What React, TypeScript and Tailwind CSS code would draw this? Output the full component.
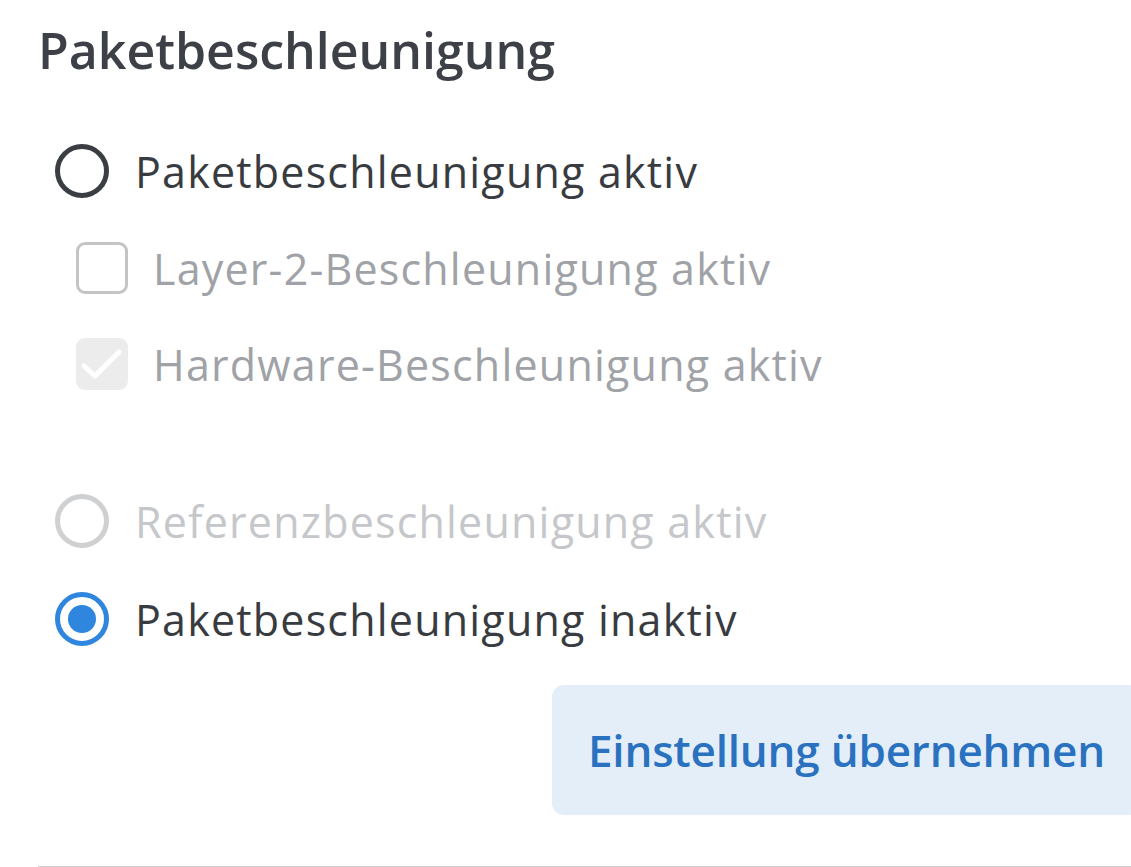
import React from "react";

// Paketbeschleunigung settings panel (mobile screenshot, 1131 × 867)

const FONT = "font-['Open_Sans','Noto_Sans',sans-serif]";

function Radio({ state }: { state: "off" | "disabled" | "on" }) {
  if (state === "on") {
    return (
      <span className="flex h-[54px] w-[54px] shrink-0 items-center justify-center rounded-full border-[5px] border-[#2f86de]">
        <span className="h-[28px] w-[28px] rounded-full bg-[#2f86de]" />
      </span>
    );
  }
  const border = state === "off" ? "border-[#3a3d42]" : "border-[#cfd0d2]";
  return <span className={`h-[54px] w-[54px] shrink-0 rounded-full border-[5px] ${border}`} />;
}

function Checkbox({ checked }: { checked: boolean }) {
  if (checked) {
    return (
      <span className="flex h-[52px] w-[52px] shrink-0 items-center justify-center rounded-[9px] bg-[#ececed]">
        <svg viewBox="0 0 52 52" className="h-[52px] w-[52px]" fill="none" stroke="#ffffff" strokeWidth={5} strokeLinecap="round" strokeLinejoin="round">
          <path d="M8 28l11 10L43 14" />
        </svg>
      </span>
    );
  }
  return <span className="h-[52px] w-[52px] shrink-0 rounded-[9px] border-[3px] border-[#c3c4c6]" />;
}

function RadioRow({ label, state }: { label: string; state: "off" | "disabled" | "on" }) {
  const color = state === "disabled" ? "text-[#c5c7ca]" : "text-[#383b40]";
  return (
    <div className="flex h-[98px] items-center gap-[26px] pl-[17px]">
      <Radio state={state} />
      <span className={`text-[43px] leading-none tracking-[1.2px] ${color}`}>{label}</span>
    </div>
  );
}

function CheckRow({ label, checked }: { label: string; checked: boolean }) {
  return (
    <div className="flex h-[96px] items-center gap-[25px] pl-[38px]">
      <Checkbox checked={checked} />
      <span className="text-[43px] leading-none tracking-[1.2px] text-[#9fa2a6]">{label}</span>
    </div>
  );
}

export default function App() {
  return (
    <div className={`min-h-[867px] w-full overflow-hidden bg-white ${FONT}`}>
      <div className="pl-[38px] pt-[14px]">
        <h1 className="text-[50px] font-semibold leading-[72px] text-[#3d4046]">Paketbeschleunigung</h1>

        <div className="mt-[36px]">
          <RadioRow label="Paketbeschleunigung aktiv" state="off" />
          <CheckRow label="Layer-2-Beschleunigung aktiv" checked={false} />
          <CheckRow label="Hardware-Beschleunigung aktiv" checked />
          <div className="h-[60px]" />
          <RadioRow label="Referenzbeschleunigung aktiv" state="disabled" />
          <RadioRow label="Paketbeschleunigung inaktiv" state="on" />
        </div>

        <div className="mt-[17px] flex justify-end">
          <button className="-mr-[10px] flex h-[130px] items-center rounded-[12px] bg-[#e4eef9] px-[36px] text-[44px] font-semibold tracking-[-0.2px] text-[#2a72bf]">
            Einstellung übernehmen
          </button>
        </div>

        <div className="mt-[51px] h-[2px] bg-[#d0d0d0]" />
      </div>
    </div>
  );
}
